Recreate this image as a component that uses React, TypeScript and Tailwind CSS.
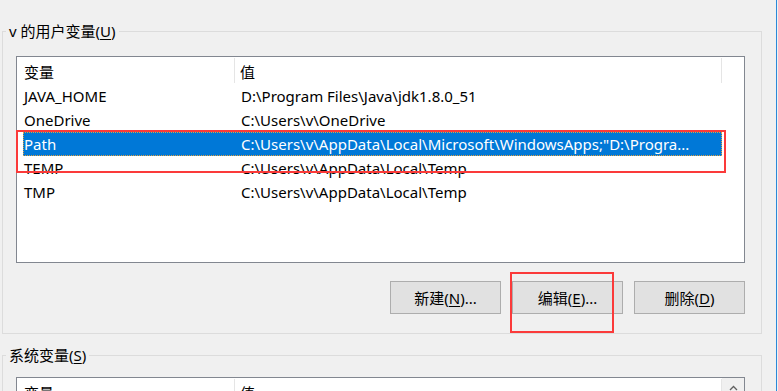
import { ReactNode } from 'react'

const font = { fontFamily: '"Noto Sans", "Noto Sans CJK SC", sans-serif' }

const userVars = [
  { name: 'JAVA_HOME', value: 'D:\\Program Files\\Java\\jdk1.8.0_51' },
  { name: 'OneDrive', value: 'C:\\Users\\v\\OneDrive' },
  { name: 'Path', value: 'C:\\Users\\v\\AppData\\Local\\Microsoft\\WindowsApps;"D:\\Progra...', selected: true },
  { name: 'TEMP', value: 'C:\\Users\\v\\AppData\\Local\\Temp' },
  { name: 'TMP', value: 'C:\\Users\\v\\AppData\\Local\\Temp' },
]

const Key = ({ children }: { children: ReactNode }) => <span className="underline underline-offset-2">{children}</span>

const Header = () => (
  <div className="flex h-[27px] bg-white">
    <div className="w-[217px] pl-[7px] pt-[5px] leading-[20px]">变量</div>
    <div className="w-px my-[1px] bg-[#e5e5e5]" />
    <div className="w-[486px] pl-[5px] pt-[5px] leading-[20px]">值</div>
    <div className="w-px my-[1px] bg-[#e5e5e5]" />
  </div>
)

const Button = ({ children }: { children: ReactNode }) => (
  <button className="w-[111px] h-[33px] bg-[#e1e1e1] border border-[#adadad] text-[15px] text-black leading-[20px]">
    {children}
  </button>
)

export default function App() {
  return (
    <div className="relative w-[778px] h-[391px] overflow-hidden bg-[#f0f0f0] text-[15px] text-black flex" style={font}>
      <div className="w-[776px] pt-[21px] pl-[2px]">
        {/* 用户变量 */}
        <fieldset className="w-[760px] border border-[#dcdcdc] pb-[19px]">
          <legend className="ml-[3px] px-[3px] leading-[20px]">
            v 的用户变量(<Key>U</Key>)
          </legend>
          <div className="ml-[13px] mt-[15px] w-[729px] h-[207px] border border-[#828790] bg-white">
            <Header />
            {userVars.map((v) => (
              <div
                key={v.name}
                className={`ml-[6px] w-[699px] h-[24px] flex leading-[22px] ${
                  v.selected ? 'bg-[#0078d7] text-white border border-dotted border-[#e0a040]' : 'border border-transparent'
                }`}
              >
                <div className="w-[217px] pl-[0px] whitespace-nowrap">{v.name}</div>
                <div className="flex-1 whitespace-nowrap overflow-hidden">{v.value}</div>
              </div>
            ))}
          </div>
          <div className="mt-[18px] ml-[13px] w-[729px] flex justify-end gap-[11px]">
            <Button>新建(<Key>N</Key>)...</Button>
            <Button>编辑(<Key>E</Key>)...</Button>
            <Button>删除(<Key>D</Key>)</Button>
          </div>
        </fieldset>

        {/* 系统变量 */}
        <fieldset className="mt-[11px] w-[760px] border border-[#dcdcdc] pb-[19px]">
          <legend className="ml-[3px] px-[3px] leading-[20px]">
            系统变量(<Key>S</Key>)
          </legend>
          <div className="ml-[13px] mt-[12px] w-[729px] h-[120px] border border-[#828790] bg-white flex">
            <div className="flex h-[27px] w-[705px]">
              <div className="w-[217px] pl-[7px] pt-[5px] leading-[20px]">变量</div>
              <div className="w-px my-[1px] bg-[#e5e5e5]" />
              <div className="w-[486px] pl-[5px] pt-[5px] leading-[20px]">值</div>
              <div className="w-px my-[1px] bg-[#e5e5e5]" />
            </div>
            <div className="w-[22px] h-full bg-[#f0f0f0] flex justify-center pt-[7px]">
              <svg width="9" height="6" viewBox="0 0 9 6" fill="none" stroke="#606060" strokeWidth="1.3">
                <path d="M1 5 L4.5 1.5 L8 5" />
              </svg>
            </div>
          </div>
        </fieldset>
      </div>
      <div className="w-px h-full bg-[#2b88d8]" />
      <div className="w-px h-full bg-[#f0f0f0]" />

      {/* annotation boxes */}
      <div className="absolute left-[16px] top-[130px] w-[710px] h-[43px] border-2 border-[#fb3a3a]" />
      <div className="absolute left-[510px] top-[272px] w-[104px] h-[61px] border-2 border-[#fb3a3a]" />
    </div>
  )
}
